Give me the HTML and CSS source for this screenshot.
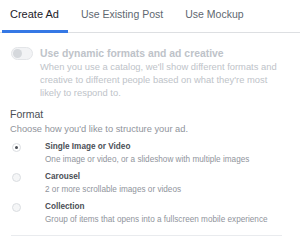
FILE: index.html
```html
<!DOCTYPE html>
<html lang="en">
<head>
  <meta charset="UTF-8">
  <title>Create Ad</title>
  <link rel="stylesheet" href="styles.css">
</head>
<body>
  <!-- Tabs -->
  <nav class="tabs">
    <div class="tab active">Create Ad</div>
    <div class="tab">Use Existing Post</div>
    <div class="tab">Use Mockup</div>
  </nav>

  <!-- Dynamic creative (disabled) -->
  <section class="dynamic">
    <span class="toggle"><span class="knob"></span></span>
    <div class="dynamic-text">
      <div class="dynamic-title">Use dynamic formats and ad creative</div>
      <p>When you use a catalog, we'll show different formats and creative to different people based on what they're most likely to respond to.</p>
    </div>
  </section>

  <!-- Format -->
  <section class="format">
    <div class="format-label">Format</div>
    <div class="format-help">Choose how you'd like to structure your ad.</div>

    <div class="option">
      <span class="radio checked"></span>
      <div>
        <div class="option-title">Single Image or Video</div>
        <div class="option-desc">One image or video, or a slideshow with multiple images</div>
      </div>
    </div>
    <div class="option">
      <span class="radio"></span>
      <div>
        <div class="option-title">Carousel</div>
        <div class="option-desc">2 or more scrollable images or videos</div>
      </div>
    </div>
    <div class="option">
      <span class="radio"></span>
      <div>
        <div class="option-title">Collection</div>
        <div class="option-desc">Group of items that opens into a fullscreen mobile experience</div>
      </div>
    </div>
  </section>

  <hr class="divider">
</body>
</html>
```

FILE: styles.css
```css
body {
  font-family: "Liberation Sans", Arial, sans-serif;
  margin: 0;
  padding: 0;
  background-color: #fff;
  color: #1d2129;
  width: 300px;
  height: 241px;
  overflow: hidden;
}
.tabs {
  display: flex;
  gap: 5px;
  padding-left: 2px;
  border-bottom: 1px solid #dddfe2;
}
.tab {
  font-size: 10.5px;
  line-height: 13px;
  color: #606770;
  padding: 8px 9px 9px 8px;
  border-bottom: 3px solid transparent;
  margin-bottom: -1px;
}
.tab.active {
  font-size: 11px;
  color: #1d2129;
  border-bottom-color: #3578e5;
}
.dynamic {
  display: flex;
  gap: 7px;
  padding: 14px 10px 0 11px;
}
.toggle {
  flex: none;
  width: 20px;
  height: 11px;
  border: 1px solid #e3e5e8;
  border-radius: 7px;
  background: #f2f3f5;
  position: relative;
}
.knob {
  position: absolute;
  left: 1px;
  top: 1px;
  width: 9px;
  height: 9px;
  border-radius: 50%;
  background: #d5d8dc;
}
.dynamic-title {
  font-size: 10.4px;
  font-weight: bold;
  color: #bec3c9;
  line-height: 13px;
}
.dynamic-text p {
  margin: 0;
  font-size: 9.4px;
  line-height: 13px;
  color: #bec3c9;
}
.format {
  padding: 9px 10px 0;
}
.format-label {
  font-size: 10.5px;
  line-height: 13px;
  color: #4b4f56;
}
.format-help {
  font-size: 9.3px;
  line-height: 13px;
  color: #90949c;
  margin-top: 2px;
}
.option {
  display: flex;
  gap: 24px;
  margin-top: 5px;
}
.option + .option {
  margin-top: 4px;
}
.radio {
  flex: none;
  width: 7px;
  height: 7px;
  margin: 2px 0 0 2px;
  border: 1px solid #dadde1;
  border-radius: 50%;
  background: #f5f6f7;
  position: relative;
}
.radio.checked {
  background: #fff;
}
.radio.checked::after {
  content: "";
  position: absolute;
  left: 2px;
  top: 2px;
  width: 3px;
  height: 3px;
  border-radius: 50%;
  background: #4b4f56;
}
.option-title {
  font-size: 8.2px;
  font-weight: bold;
  color: #4b4f56;
  line-height: 12px;
}
.option-desc {
  font-size: 8.2px;
  color: #90949c;
  line-height: 14px;
}
.divider {
  border: 0;
  border-top: 1px solid #e9ebee;
  margin: 8px 18px 0 11px;
}
```
